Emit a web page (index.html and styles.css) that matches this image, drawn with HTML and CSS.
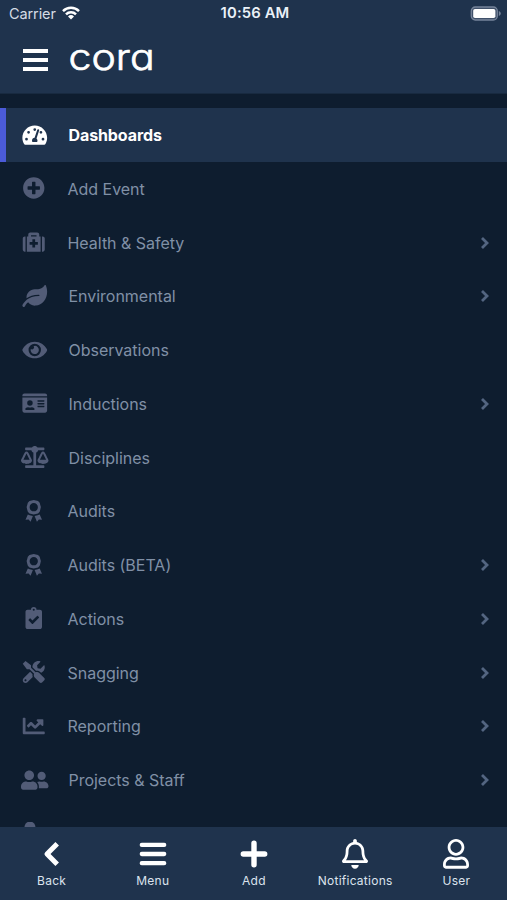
FILE: index.html
```html
<!DOCTYPE html>
<html lang="en">
<head>
<meta charset="utf-8">
<title>Cora</title>
<link rel="stylesheet" href="styles.css">
</head>
<body>
<svg class="defs" aria-hidden="true">
  <symbol id="award" viewBox="0 0 384 512"><path fill-rule="evenodd" d="M192 0l50 12 50 14 38 38 14 50 14 50-14 60-14 50-38 38-50 14-50 12-50-12-50-14-38-38-14-50-14-60 14-50 14-50 38-38 50-14zM192 72a96 96 0 1 0 0 192 96 96 0 0 0 0-192zM54 335l44 20 74 20-54 133-46-54-72 4zM330 335l-44 20-74 20 54 133 46-54 72 4z"/></symbol>
  <symbol id="chevron" viewBox="0 0 10 14"><path d="M2 2l5 5-5 5" fill="none" stroke="currentColor" stroke-width="2.8"/></symbol>
</svg>
<div class="app">
  <header class="header">
    <div class="status">
      <div class="carrier">Carrier
        <svg class="wifi" viewBox="0 0 18 14"><g fill="none" stroke="currentColor" stroke-width="2.5"><path d="M1 5.1a11.4 11.4 0 0 1 16 0"/><path d="M4 8.4a7.1 7.1 0 0 1 10 0"/></g><path d="M6 10.5a4.3 4.3 0 0 1 6 0l-3 3z"/></svg>
      </div>
      <div class="time">10:56 AM</div>
      <div class="power"><svg class="battery" viewBox="0 0 31 15"><rect x="1.3" y="1" width="26" height="13" rx="4" fill="#40516a" stroke="#76849a" stroke-width="1.3"/><rect x="3.2" y="3" width="22.2" height="9" rx="1.8"/><path d="M28.8 5c1.4.7 2 1.5 2 2.5s-.6 1.8-2 2.5z" fill="#76849a"/></svg></div>
    </div>
    <div class="brand">
      <svg class="burger" viewBox="0 0 25 22"><path d="M0 0h25v4H0zM0 9h25v4H0zM0 18h25v4H0z"/></svg>
      <svg class="logo" viewBox="0 0 100 48"><text x="3.6" y="34.2" textLength="86" lengthAdjust="spacingAndGlyphs">cora</text></svg>
    </div>
  </header>

  <nav class="menu">
    <a class="item wide active">
      <svg class="icon" viewBox="0 0 576 512"><path fill-rule="evenodd" d="M288 32C129 32 0 161 0 320c0 53 14 102 39 145 6 10 16 15 27 15h444c11 0 21-5 27-15 25-43 39-92 39-145C576 161 447 32 288 32zM288 96a32 32 0 1 1 0 64 32 32 0 0 1 0-64zM96 384a32 32 0 1 1 0-64 32 32 0 0 1 0 64zM144 224a32 32 0 1 1 0-64 32 32 0 0 1 0 64zM390 153l-61 184c14 12 23 28 23 47 0 12-3 23-9 32H233c-6-9-9-20-9-32 0-34 27-62 60-64l61-182c4-13 17-20 30-15s20 18 15 30zM432 160a32 32 0 1 1 0 64 32 32 0 0 1 0-64zM480 384a32 32 0 1 1 0-64 32 32 0 0 1 0 64z"/></svg>
      <span class="label">Dashboards</span>
    </a>
    <a class="item">
      <svg class="icon" viewBox="0 0 512 512"><path d="M256 8C119 8 8 119 8 256s111 248 248 248 248-111 248-248S393 8 256 8zm144 276c0 6.600-5.400 12-12 12h-92v92c0 6.600-5.400 12-12 12h-56c-6.600 0-12-5.400-12-12v-92h-92c-6.600 0-12-5.400-12-12v-56c0-6.600 5.400-12 12-12h92v-92c0-6.600 5.400-12 12-12h56c6.600 0 12 5.400 12 12v92h92c6.600 0 12 5.400 12 12v56z"/></svg>
      <span class="label">Add Event</span>
    </a>
    <a class="item">
      <svg class="icon" viewBox="0 0 512 512"><path fill-rule="evenodd" d="M96 480h320V128h-32V80c0-26-22-48-48-48H176c-26 0-48 22-48 48v48H96zM192 96h128v32H192zM160 264c0-4 4-8 8-8h56v-56c0-4 4-8 8-8h48c4 0 8 4 8 8v56h56c4 0 8 4 8 8v48c0 4-4 8-8 8h-56v56c0 4-4 8-8 8h-48c-4 0-8-4-8-8v-56h-56c-4 0-8-4-8-8zM48 128c-26 0-48 22-48 48v256c0 26 22 48 48 48h16V128zM464 128h-16v352h16c26 0 48-22 48-48V176c0-26-22-48-48-48z"/></svg>
      <span class="label">Health &amp; Safety</span><svg class="arrow"><use href="#chevron"/></svg>
    </a>
    <a class="item wide">
      <svg class="icon" viewBox="0 0 576 512"><path d="M546.2 9.700c-5.600-12.500-21.600-13-28.300-1.200C486.900 62.400 431.400 96 368 96h-80C182 96 96 182 96 288c0 7 .8 13.700 1.500 20.500C161.300 262.800 253.400 224 384 224c8.800 0 16 7.200 16 16s-7.200 16-16 16C132.600 256 26 410.100 2.400 468c-6.600 16.300 1.200 34.900 17.500 41.600 16.400 6.800 35-1.100 41.800-17.300 1.500-3.600 20.900-47.900 71.900-90.600 32.400 43.900 94 85.800 174.900 77.200C465.500 467.500 576 326.700 576 154.300c0-50.200-10.800-102.200-29.800-144.600z"/></svg>
      <span class="label">Environmental</span><svg class="arrow"><use href="#chevron"/></svg>
    </a>
    <a class="item wide">
      <svg class="icon" viewBox="0 0 576 512"><path d="M572.520 241.400C518.290 135.590 410.930 64 288 64S57.680 135.640 3.480 241.410a32.350 32.350 0 0 0 0 29.190C57.710 376.410 165.070 448 288 448s230.320-71.640 284.520-177.410a32.350 32.350 0 0 0 0-29.190zM288 400a144 144 0 1 1 144-144 143.930 143.930 0 0 1-144 144zm0-240a95.310 95.310 0 0 0-25.310 3.790 47.850 47.850 0 0 1-66.900 66.900A95.780 95.780 0 1 0 288 160z"/></svg>
      <span class="label">Observations</span>
    </a>
    <a class="item wide">
      <svg class="icon" viewBox="0 0 576 512"><path fill-rule="evenodd" d="M528 32H48C22 32 0 54 0 80v16h576V80c0-26-22-48-48-48zM0 432c0 26 22 48 48 48h480c26 0 48-22 48-48V128H0zM352 200c0-4 4-8 8-8h144c4 0 8 4 8 8v16c0 4-4 8-8 8H360c-4 0-8-4-8-8zM352 264c0-4 4-8 8-8h144c4 0 8 4 8 8v16c0 4-4 8-8 8H360c-4 0-8-4-8-8zM352 328c0-4 4-8 8-8h144c4 0 8 4 8 8v16c0 4-4 8-8 8H360c-4 0-8-4-8-8zM176 192a64 64 0 1 1 0 128 64 64 0 0 1 0-128zM67 396c9-26 33-44 61-44h8c25 10 54 10 80 0h8c28 0 52 18 61 44 3 10-5 20-16 20H83c-11 0-19-10-16-20z"/></svg>
      <span class="label">Inductions</span><svg class="arrow"><use href="#chevron"/></svg>
    </a>
    <a class="item wide">
      <svg class="icon" viewBox="0 0 640 512"><path d="M256 336h-.02c0-16.180 1.340-8.730-85.050-181.510-17.650-35.290-68.190-35.360-85.870 0C-2.060 328.750.02 320.330.02 336H0c0 44.180 57.310 80 128 80s128-35.820 128-80zM128 176l72 144H56l72-144zm511.980 160c0-16.180 1.340-8.730-85.050-181.510-17.650-35.290-68.190-35.360-85.870 0-87.120 174.260-85.040 165.840-85.040 181.510H384c0 44.180 57.310 80 128 80s128-35.820 128-80h-.02zM440 320l72-144 72 144H440zm88 128H352V153.250c23.510-10.290 41.160-31.480 46.390-57.250H528c8.840 0 16-7.160 16-16V48c0-8.840-7.160-16-16-16H383.640C369.040 12.680 346.090 0 320 0s-49.040 12.680-63.640 32H112c-8.840 0-16 7.160-16 16v32c0 8.840 7.160 16 16 16h129.610c5.230 25.760 22.870 46.960 46.390 57.250V448H112c-8.840 0-16 7.160-16 16v32c0 8.840 7.160 16 16 16h416c8.840 0 16-7.160 16-16v-32c0-8.840-7.160-16-16-16z"/></svg>
      <span class="label">Disciplines</span>
    </a>
    <a class="item">
      <svg class="icon"><use href="#award"/></svg>
      <span class="label">Audits</span>
    </a>
    <a class="item">
      <svg class="icon"><use href="#award"/></svg>
      <span class="label">Audits (BETA)</span><svg class="arrow"><use href="#chevron"/></svg>
    </a>
    <a class="item">
      <svg class="icon" viewBox="0 0 384 512"><path fill-rule="evenodd" d="M336 64h-80a64 64 0 0 0-128 0H48C22 64 0 86 0 112v352c0 26 22 48 48 48h288c26 0 48-22 48-48V112c0-26-22-48-48-48zM192 40a24 24 0 1 1 0 48 24 24 0 0 1 0-48zM313 252L170 394c-5 5-13 5-17 0l-82-83c-4-4-4-12 0-17l28-28c5-4 13-4 17 0l46 46 106-105c5-5 13-5 17 0l28 28c5 5 5 13 0 17z"/></svg>
      <span class="label">Actions</span><svg class="arrow"><use href="#chevron"/></svg>
    </a>
    <a class="item">
      <svg class="icon" viewBox="0 0 512 512"><path d="M501.100 395.700L384 278.600c-23.100-23.100-57.600-27.600-85.400-13.900L192 158.100V96L64 0 0 64l96 128h62.100l106.600 106.600c-13.600 27.800-9.200 62.300 13.900 85.400l117.100 117.100c14.600 14.600 38.200 14.600 52.700 0l52.700-52.700c14.500-14.600 14.500-38.200 0-52.700zM331.700 225c28.300 0 54.900 11 74.900 31l19.400 19.400c15.800-6.900 30.800-16.500 43.800-29.500 37.100-37.100 49.700-89.300 37.900-136.700-2.200-9-13.500-12.100-20.100-5.500l-74.400 74.400-67.900-11.300L334 98.900l74.400-74.400c6.600-6.600 3.400-17.900-5.700-20.200-47.400-11.700-99.600.9-136.600 37.900-28.500 28.500-41.900 66.100-41.200 103.600l82.100 82.100c8.100-1.900 16.500-2.900 24.700-2.900zm-103.900 82l-56.700-56.700L18.700 402.800c-25 25-25 65.500 0 90.500s65.500 25 90.500 0l123.600-123.600c-7.600-19.900-9.900-41.600-5-62.700zM64 472c-13.200 0-24-10.800-24-24 0-13.300 10.700-24 24-24s24 10.700 24 24c0 13.200-10.700 24-24 24z"/></svg>
      <span class="label">Snagging</span><svg class="arrow"><use href="#chevron"/></svg>
    </a>
    <a class="item">
      <svg class="icon" viewBox="0 0 512 512"><path d="M496 384H64V80c0-8.840-7.160-16-16-16H16C7.160 64 0 71.160 0 80v336c0 17.670 14.330 32 32 32h464c8.840 0 16-7.160 16-16v-32c0-8.840-7.160-16-16-16zM464 96H345.940c-21.380 0-32.090 25.850-16.970 40.970l32.400 32.400L288 242.750l-73.370-73.370c-12.500-12.500-32.760-12.500-45.250 0l-68.690 68.690c-6.250 6.250-6.250 16.380 0 22.630l22.620 22.620c6.250 6.250 16.380 6.250 22.630 0L192 237.250l73.370 73.370c12.500 12.500 32.760 12.500 45.250 0l96-96 32.400 32.400c15.120 15.120 40.970 4.410 40.970-16.970V112c.01-8.840-7.150-16-15.990-16z"/></svg>
      <span class="label">Reporting</span><svg class="arrow"><use href="#chevron"/></svg>
    </a>
    <a class="item wide">
      <svg class="icon" viewBox="0 0 640 512"><path d="M192 256c61.900 0 112-50.100 112-112S253.900 32 192 32 80 82.100 80 144s50.100 112 112 112zm76.800 32h-8.300c-20.800 10-43.900 16-68.500 16s-47.600-6-68.500-16h-8.300C51.600 288 0 339.600 0 403.200V432c0 26.500 21.500 48 48 48h288c26.500 0 48-21.500 48-48v-28.800c0-63.600-51.600-115.200-115.200-115.200zM480 256c53 0 96-43 96-96s-43-96-96-96-96 43-96 96 43 96 96 96zm48 32h-3.800c-13.900 4.800-28.600 8-44.200 8s-30.300-3.200-44.200-8H432c-20.400 0-39.200 5.900-55.700 15.400 24.400 26.300 39.700 61.200 39.700 99.800v38.400c0 2.200-.5 4.300-.6 6.400H592c26.500 0 48-21.500 48-48 0-61.900-50.100-112-112-112z"/></svg>
      <span class="label">Projects &amp; Staff</span><svg class="arrow"><use href="#chevron"/></svg>
    </a>
    <a class="item">
      <svg class="icon" viewBox="0 0 640 512"><circle cx="232" cy="118" r="128"/></svg>
    </a>
  </nav>

  <footer class="tabs">
    <a class="tab"><svg viewBox="0 0 30 30"><path d="M20.200 4.800L10 15l10.200 10.200" fill="none" stroke="currentColor" stroke-width="5" stroke-linejoin="round"/></svg>Back</a>
    <a class="tab"><svg viewBox="0 0 30 30"><path d="M3.800 5.900h22.400M3.800 15h22.400M3.800 24.200h22.400" fill="none" stroke="currentColor" stroke-width="4.300" stroke-linecap="round"/></svg>Menu</a>
    <a class="tab"><svg viewBox="0 0 30 30"><path d="M15 4.300v21.400M4.300 15h21.400" fill="none" stroke="currentColor" stroke-width="5.400" stroke-linecap="round"/></svg>Add</a>
    <a class="tab"><svg viewBox="-35 0 518 518"><path d="M439.390 362.290c-19.320-20.760-55.470-51.990-55.470-154.290 0-77.700-54.480-139.900-127.940-155.160V32c0-17.670-14.320-32-31.980-32s-31.980 14.330-31.980 32v20.840C118.560 68.100 64.080 130.300 64.080 208c0 102.300-36.150 133.530-55.470 154.290-6 6.450-8.660 14.160-8.610 21.710.11 16.400 12.980 32 32.100 32h383.800c19.120 0 32-15.600 32.100-32 .05-7.550-2.610-15.270-8.610-21.710zM67.530 368c21.220-27.970 44.420-74.330 44.530-159.420 0-.2-.06-.38-.06-.58 0-61.860 50.140-112 112-112s112 50.140 112 112c0 .2-.06.38-.06.58.11 85.100 23.310 131.460 44.530 159.420H67.530zM224 512c35.320 0 63.970-28.650 63.970-64H160.030c0 35.350 28.650 64 63.970 64z"/></svg>Notifications</a>
    <a class="tab"><svg viewBox="-35 0 518 518"><path d="M313.600 304c-28.700 0-42.500 16-89.600 16-47.100 0-60.800-16-89.600-16C60.200 304 0 364.200 0 438.400V464c0 26.500 21.500 48 48 48h352c26.500 0 48-21.500 48-48v-25.600c0-74.200-60.200-134.400-134.400-134.400zM400 464H48v-25.600c0-47.600 38.800-86.400 86.400-86.400 14.600 0 38.300 16 89.600 16 51.700 0 74.900-16 89.600-16 47.600 0 86.400 38.800 86.400 86.400V464zM224 288c79.500 0 144-64.500 144-144S303.500 0 224 0 80 64.500 80 144s64.500 144 144 144zm0-240c52.900 0 96 43.100 96 96s-43.100 96-96 96-96-43.100-96-96 43.100-96 96-96z"/></svg>User</a>
  </footer>
</div>
</body>
</html>
```
FILE: styles.css
```css
* { box-sizing: border-box; }
body { margin: 0; background: #0e1d2f; font-family: Inter, sans-serif; color: #fff; }
svg { display: block; fill: currentColor; flex: none; }
.defs { display: none; }
.app { height: 900px; width: 507px; display: flex; flex-direction: column; overflow: hidden; }

.header { flex: none; height: 94px; background: #1f334d; border-bottom: 1px solid #182a40; }
.status { height: 28px; display: grid; grid-template-columns: 1fr auto 1fr; align-items: center; padding: 0 6px 1px 9px; }
.carrier { display: flex; align-items: center; gap: 6px; font-size: 14.500px; color: #d5dce5; letter-spacing: -.1px; }
.wifi { width: 18px; height: 14px; color: #fff; margin-top: -1px; }
.time { font-size: 14.800px; font-weight: 600; letter-spacing: .15px; color: #eaf1f8; padding-bottom: 1px; }
.power { display: flex; justify-content: flex-end; }
.battery { width: 31px; height: 15px; margin-top: -1px; }
.brand { display: flex; align-items: center; height: 64px; padding-left: 23px; gap: 17px; }
.burger { width: 25px; height: 22px; }
.logo { width: 100px; height: 48px; overflow: visible; }
.logo text { font-size: 37px; font-weight: 300; font-feature-settings: "cv11"; stroke: currentColor; stroke-width: .7px; stroke-linejoin: round; }

.menu { flex: 1; min-height: 0; overflow: hidden; padding-top: 14.200px; }
.item { display: flex; align-items: center; height: 53.750px; padding: 0 17px 0 20px; font-size: 16px; color: #8090a6; letter-spacing: -.02px; }
.icon { width: 27.500px; height: 22px; margin: 0 20px 1px 0; color: #525c77; }
.wide .icon { margin: 0 20px 1px 1px; }
.label { flex: 1; }
.arrow { width: 10px; height: 14px; color: #536581; }
.active { background: #1f334d; border-left: 6px solid #4b5bd8; padding-left: 14px; color: #fff; font-weight: 700; letter-spacing: -.1px; }
.active .icon { color: #fff; }

.tabs { flex: none; height: 73.500px; background: #1f334d; display: grid; grid-template-columns: repeat(5, 101.200px); padding: 12px 0 0 1px; }
.tab { display: flex; flex-direction: column; align-items: center; gap: 4px; font-size: 12px; line-height: 15px; letter-spacing: .25px; color: #dce3ed; }
.tab svg { width: 30px; height: 30px; color: #fff; }
```
